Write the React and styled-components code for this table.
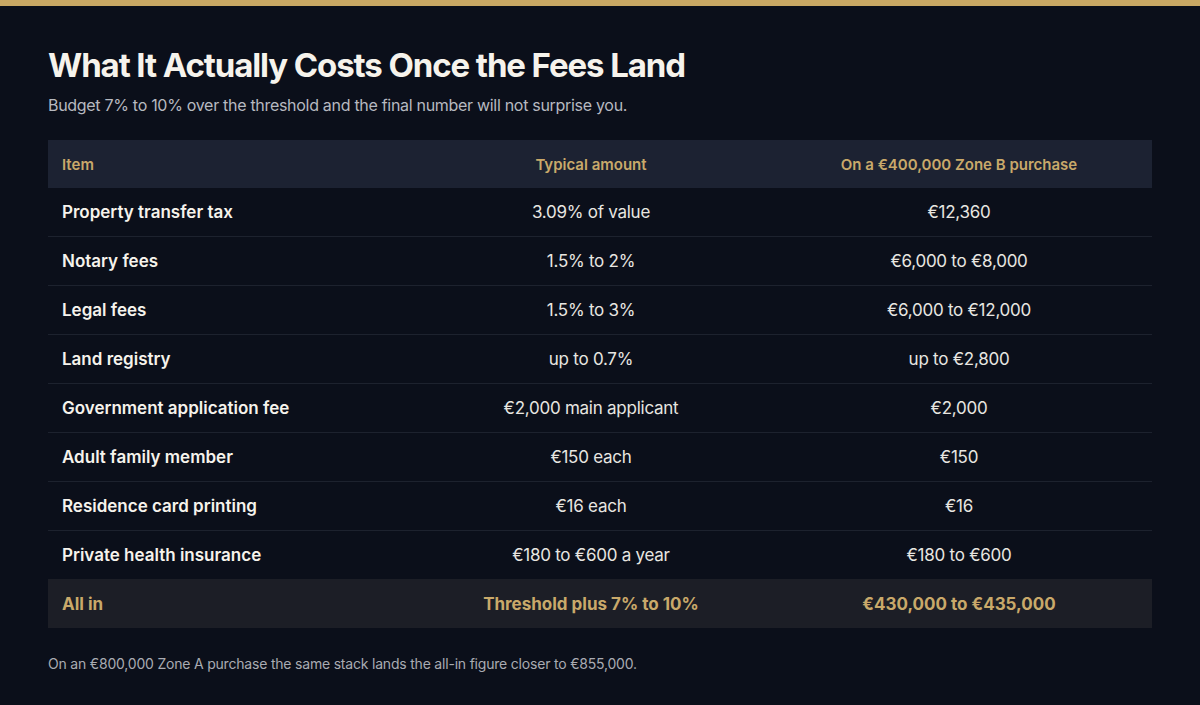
import React from 'react';
import styled, { createGlobalStyle } from 'styled-components';

const rows = [
  ['Property transfer tax', '3.09% of value', '€12,360'],
  ['Notary fees', '1.5% to 2%', '€6,000 to €8,000'],
  ['Legal fees', '1.5% to 3%', '€6,000 to €12,000'],
  ['Land registry', 'up to 0.7%', 'up to €2,800'],
  ['Government application fee', '€2,000 main applicant', '€2,000'],
  ['Adult family member', '€150 each', '€150'],
  ['Residence card printing', '€16 each', '€16'],
  ['Private health insurance', '€180 to €600 a year', '€180 to €600'],
];

export default function App() {
  return (
    <Page>
      <GlobalStyle />
      <TopBar />
      <Content>
        <Title>What It Actually Costs Once the Fees Land</Title>
        <Subtitle>Budget 7% to 10% over the threshold and the final number will not surprise you.</Subtitle>
        <Table>
          <colgroup>
            <col style={{ width: 368 }} />
            <col style={{ width: 350 }} />
            <col style={{ width: 386 }} />
          </colgroup>
          <thead>
            <tr>
              <Th>Item</Th>
              <Th $center>Typical amount</Th>
              <Th $center>On a €400,000 Zone B purchase</Th>
            </tr>
          </thead>
          <tbody>
            {rows.map((r) => (
              <Row key={r[0]}>
                <Label>{r[0]}</Label>
                <Cell>{r[1]}</Cell>
                <Cell>{r[2]}</Cell>
              </Row>
            ))}
            <TotalRow>
              <TotalCell>All in</TotalCell>
              <TotalCell $center>Threshold plus 7% to 10%</TotalCell>
              <TotalCell $center>€430,000 to €435,000</TotalCell>
            </TotalRow>
          </tbody>
        </Table>
        <Note>On an €800,000 Zone A purchase the same stack lands the all-in figure closer to €855,000.</Note>
      </Content>
    </Page>
  );
}

const GlobalStyle = createGlobalStyle`
  html, body {
    margin: 0;
    padding: 0;
    background: #0b0f1a;
  }
  body {
    font-family: Inter, "Liberation Sans", sans-serif;
  }
`;

const Page = styled.div`
  min-height: 705px;
  background: #0b0f1a;
  color: #f4f1ea;
`;

const TopBar = styled.div`
  height: 6px;
  background: #c9a864;
`;

const Content = styled.div`
  padding: 39px 48px 0;
`;

const Title = styled.h1`
  margin: 0;
  font-size: 33px;
  line-height: 40px;
  font-weight: 700;
  letter-spacing: -1.1px;
  color: #f6f3ec;
`;

const Subtitle = styled.p`
  margin: 8px 0 0;
  font-size: 16px;
  line-height: 24px;
  letter-spacing: -0.3px;
  color: #b7b9c0;
`;

const Table = styled.table`
  margin-top: 23px;
  width: 1104px;
  border-collapse: collapse;
  table-layout: fixed;
`;

const Th = styled.th`
  height: 48px;
  padding: 0 14px;
  background: #1c2232;
  color: #c9a96a;
  font-size: 15px;
  font-weight: 600;
  text-align: ${(p) => (p.$center ? 'center' : 'left')};
`;

const Row = styled.tr`
  & + & td {
    border-top: 1px solid #1d222e;
  }
`;

const Label = styled.td`
  height: 48px;
  padding: 0 14px;
  font-size: 17px;
  font-weight: 600;
  color: #f6f3ec;
`;

const Cell = styled.td`
  height: 48px;
  padding: 0 14px;
  font-size: 17px;
  letter-spacing: -0.25px;
  text-align: center;
  color: #e8e6e1;
`;

const TotalRow = styled.tr`
  background: #1c1e26;
`;

const TotalCell = styled.td`
  height: 49px;
  padding: 0 14px;
  font-size: 17px;
  font-weight: 700;
  color: #c9a96a;
  text-align: ${(p) => (p.$center ? 'center' : 'left')};
`;

const Note = styled.p`
  margin: 26px 0 0;
  font-size: 14px;
  line-height: 20px;
  letter-spacing: -0.2px;
  color: #a9abb2;
`;
